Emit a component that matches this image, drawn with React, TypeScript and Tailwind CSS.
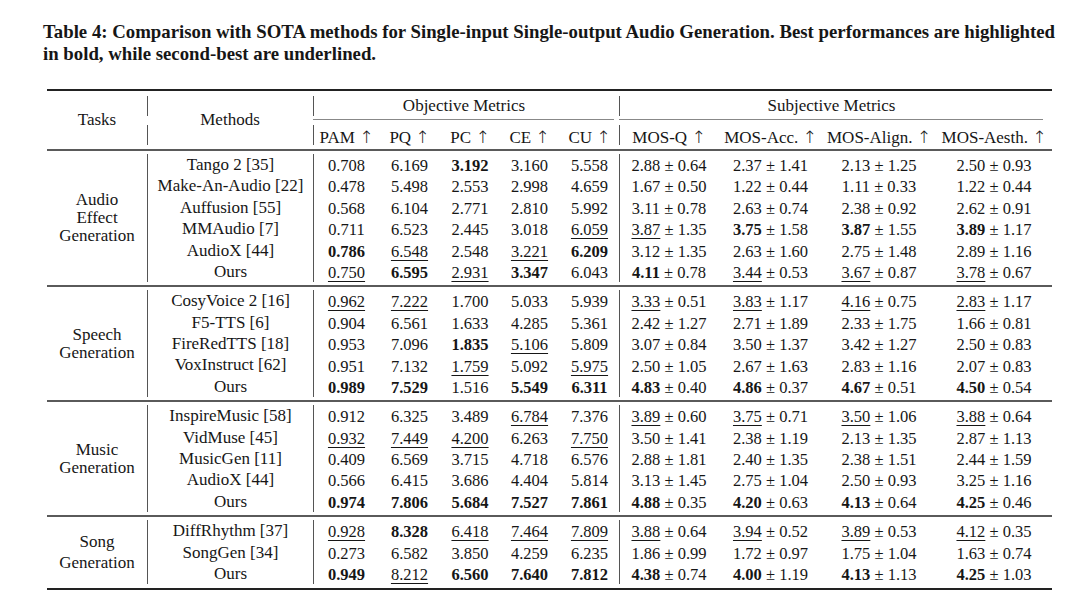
type Row = { method: string; obj: string[]; subj: string[] };
type Section = { task: string[]; leading: string; rows: Row[] };

const sections: Section[] = [
  {
    task: ["Audio", "Effect", "Generation"],
    leading: "leading-[18px]",
    rows: [
      { method: "Tango 2 [35]", obj: ["0.708", "6.169", "*3.192", "3.160", "5.558"], subj: ["2.88|0.64", "2.37|1.41", "2.13|1.25", "2.50|0.93"] },
      { method: "Make-An-Audio [22]", obj: ["0.478", "5.498", "2.553", "2.998", "4.659"], subj: ["1.67|0.50", "1.22|0.44", "1.11|0.33", "1.22|0.44"] },
      { method: "Auffusion [55]", obj: ["0.568", "6.104", "2.771", "2.810", "5.992"], subj: ["3.11|0.78", "2.63|0.74", "2.38|0.92", "2.62|0.91"] },
      { method: "MMAudio [7]", obj: ["0.711", "6.523", "2.445", "3.018", "_6.059"], subj: ["_3.87|1.35", "*3.75|1.58", "*3.87|1.55", "*3.89|1.17"] },
      { method: "AudioX [44]", obj: ["*0.786", "_6.548", "2.548", "_3.221", "*6.209"], subj: ["3.12|1.35", "2.63|1.60", "2.75|1.48", "2.89|1.16"] },
      { method: "Ours", obj: ["_0.750", "*6.595", "_2.931", "*3.347", "6.043"], subj: ["*4.11|0.78", "_3.44|0.53", "_3.67|0.87", "_3.78|0.67"] },
    ],
  },
  {
    task: ["Speech", "Generation"],
    leading: "leading-[18px]",
    rows: [
      { method: "CosyVoice 2 [16]", obj: ["_0.962", "_7.222", "1.700", "5.033", "5.939"], subj: ["_3.33|0.51", "_3.83|1.17", "_4.16|0.75", "_2.83|1.17"] },
      { method: "F5-TTS [6]", obj: ["0.904", "6.561", "1.633", "4.285", "5.361"], subj: ["2.42|1.27", "2.71|1.89", "2.33|1.75", "1.66|0.81"] },
      { method: "FireRedTTS [18]", obj: ["0.953", "7.096", "*1.835", "_5.106", "5.809"], subj: ["3.07|0.84", "3.50|1.37", "3.42|1.27", "2.50|0.83"] },
      { method: "VoxInstruct [62]", obj: ["0.951", "7.132", "_1.759", "5.092", "_5.975"], subj: ["2.50|1.05", "2.67|1.63", "2.83|1.16", "2.07|0.83"] },
      { method: "Ours", obj: ["*0.989", "*7.529", "1.516", "*5.549", "*6.311"], subj: ["*4.83|0.40", "*4.86|0.37", "*4.67|0.51", "*4.50|0.54"] },
    ],
  },
  {
    task: ["Music", "Generation"],
    leading: "leading-[18px]",
    rows: [
      { method: "InspireMusic [58]", obj: ["0.912", "6.325", "3.489", "_6.784", "7.376"], subj: ["_3.89|0.60", "_3.75|0.71", "_3.50|1.06", "_3.88|0.64"] },
      { method: "VidMuse [45]", obj: ["_0.932", "_7.449", "_4.200", "6.263", "_7.750"], subj: ["3.50|1.41", "2.38|1.19", "2.13|1.35", "2.87|1.13"] },
      { method: "MusicGen [11]", obj: ["0.409", "6.569", "3.715", "4.718", "6.576"], subj: ["2.88|1.81", "2.40|1.35", "2.38|1.51", "2.44|1.59"] },
      { method: "AudioX [44]", obj: ["0.566", "6.415", "3.686", "4.404", "5.814"], subj: ["3.13|1.45", "2.75|1.04", "2.50|0.93", "3.25|1.16"] },
      { method: "Ours", obj: ["*0.974", "*7.806", "*5.684", "*7.527", "*7.861"], subj: ["*4.88|0.35", "*4.20|0.63", "*4.13|0.64", "*4.25|0.46"] },
    ],
  },
  {
    task: ["Song", "Generation"],
    leading: "leading-[21px]",
    rows: [
      { method: "DiffRhythm [37]", obj: ["_0.928", "*8.328", "_6.418", "_7.464", "_7.809"], subj: ["_3.88|0.64", "_3.94|0.52", "_3.89|0.53", "_4.12|0.35"] },
      { method: "SongGen [34]", obj: ["0.273", "6.582", "3.850", "4.259", "6.235"], subj: ["1.86|0.99", "1.72|0.97", "1.75|1.04", "1.63|0.74"] },
      { method: "Ours", obj: ["*0.949", "_8.212", "*6.560", "*7.640", "*7.812"], subj: ["*4.38|0.74", "*4.00|1.19", "*4.13|1.13", "*4.25|1.03"] },
    ],
  },
];

const objHeads = ["PAM", "PQ", "PC", "CE", "CU"];
const subjHeads = ["MOS-Q", "MOS-Acc.", "MOS-Align.", "MOS-Aesth."];

// "*" = best (bold), "_" = second best (underlined)
const Num = ({ value }: { value: string }) => {
  if (value.startsWith("*")) return <span className="font-bold">{value.slice(1)}</span>;
  if (value.startsWith("_"))
    return <span className="underline decoration-1 underline-offset-[3px]">{value.slice(1)}</span>;
  return <span>{value}</span>;
};

const MeanStd = ({ value }: { value: string }) => {
  const [mean, std] = value.split("|");
  return (
    <span>
      <Num value={mean} /> ± {std}
    </span>
  );
};

const Head = ({ label }: { label: string }) => (
  <span>
    {label} <span className="font-['DejaVu_Sans',sans-serif] text-[17px] font-extralight leading-none">↑</span>
  </span>
);

const Block = ({ section, last }: { section: Section; last: boolean }) => (
  <div className={`flex border-t-2 border-[#5a5a5a] pt-[3px] ${last ? "pb-[4px]" : "pb-[3px]"}`}>
    <div className={`flex w-[100px] flex-col items-center justify-center text-[17px] ${section.leading}`}>
      {section.task.map((t) => (
        <span key={t}>{t}</span>
      ))}
    </div>
    <div className="w-[166px] border-l border-[#555] text-[17px]">
      {section.rows.map((r) => (
        <div key={r.method} className="flex h-[21.4px] items-center justify-center">
          {r.method}
        </div>
      ))}
    </div>
    <div className="w-[306px] border-l border-[#555] text-[16.5px]">
      {section.rows.map((r) => (
        <div key={r.method} className="grid h-[21.4px] grid-cols-[65px_61px_60px_59px_61px] items-center text-center">
          {r.obj.map((v, i) => (
            <div key={i}>
              <Num value={v} />
            </div>
          ))}
        </div>
      ))}
    </div>
    <div className="w-[433px] border-l border-[#555] text-[16.5px]">
      {section.rows.map((r) => (
        <div key={r.method} className="grid h-[21.4px] grid-cols-[98px_105px_112px_118px] items-center text-center">
          {r.subj.map((v, i) => (
            <div key={i}>
              <MeanStd value={v} />
            </div>
          ))}
        </div>
      ))}
    </div>
  </div>
);

export default function App() {
  return (
    <div className="min-h-[612px] w-[1080px] bg-white pt-[21px] font-['Liberation_Serif',serif] text-[#161616]">
      <p className="pl-[43px] text-[18.8px] font-bold leading-[22px]">
        Table 4: Comparison with SOTA methods for Single-input Single-output Audio Generation. Best performances are highlighted
        <br />
        in bold, while second-best are underlined.
      </p>

      <div className="mt-[24px] ml-[47px] w-[1005px]">
        <div className="border-t-2 border-[#222]" />
        <div className="grid grid-cols-[100px_166px_306px_433px] grid-rows-[29px_29px] text-[17px]">
          <div className="col-start-1 row-span-2 row-start-1 flex items-center justify-center">Tasks</div>
          <div className="col-start-2 row-start-1 pt-[5px] pb-[4px]">
            <div className="h-full border-l border-[#555]" />
          </div>
          <div className="col-start-2 row-start-2 pt-[5px] pb-[4px]">
            <div className="h-full border-l border-[#555]" />
          </div>
          <div className="col-start-2 row-span-2 row-start-1 flex items-center justify-center">Methods</div>

          <div className="col-start-3 row-start-1 mr-[5px] border-b border-[#888] pt-[5px] pb-[3px]">
            <div className="flex h-full items-center justify-center border-l border-[#555]">Objective Metrics</div>
          </div>
          <div className="col-start-4 row-start-1 mr-[9px] border-b border-[#888] pt-[5px] pb-[3px]">
            <div className="flex h-full items-center justify-center border-l border-[#555]">Subjective Metrics</div>
          </div>

          <div className="col-start-3 row-start-2 pt-[5px] pb-[4px]">
            <div className="grid h-full grid-cols-[65px_61px_60px_59px_61px] items-center border-l border-[#555] text-center">
              {objHeads.map((h) => (
                <Head key={h} label={h} />
              ))}
            </div>
          </div>
          <div className="col-start-4 row-start-2 pt-[5px] pb-[4px]">
            <div className="grid h-full grid-cols-[98px_105px_112px_118px] items-center border-l border-[#555] text-center">
              {subjHeads.map((h) => (
                <Head key={h} label={h} />
              ))}
            </div>
          </div>
        </div>

        {sections.map((s, i) => (
          <Block key={s.task.join(" ")} section={s} last={i === sections.length - 1} />
        ))}
        <div className="border-t-2 border-[#222]" />
      </div>
    </div>
  );
}
